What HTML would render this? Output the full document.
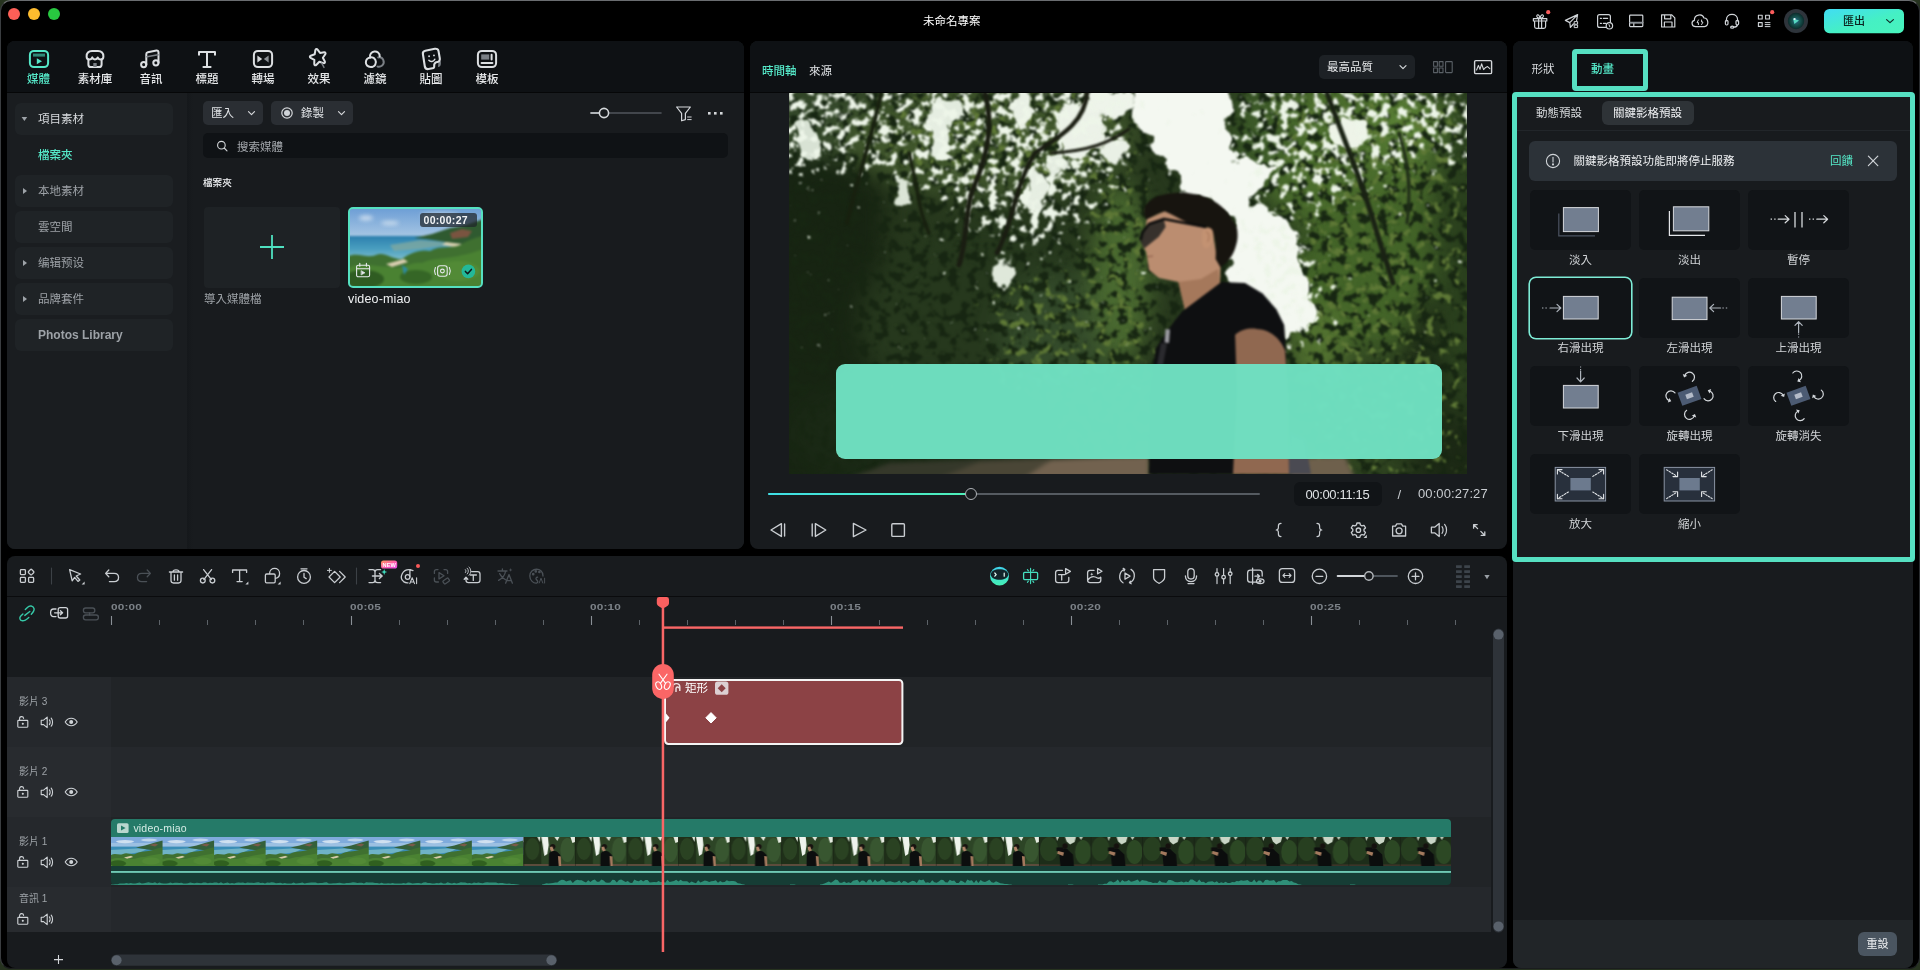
<!DOCTYPE html>
<html lang="zh-Hant">
<head>
<meta charset="utf-8">
<title>未命名專案</title>
<style>
*{box-sizing:border-box;margin:0;padding:0}
html,body{width:1920px;height:970px;overflow:hidden;background:#000}
body{font-family:"Liberation Sans","Noto Sans CJK TC",sans-serif;font-size:12px;color:#d6d9dc;position:relative}
.a{position:absolute}
.t{position:absolute;white-space:nowrap;line-height:14px;height:14px}
.c{transform:translateX(-50%)}
svg{position:absolute;overflow:visible}
.ic{fill:none;stroke-linecap:round;stroke-linejoin:round}
.dim{stroke:#5a6066}
.tl{stroke:#4ed9b9}
.panel{background:#181b1e;border-radius:8px}
.hdr{background:#0e1114;border-radius:8px 8px 0 0}
.teal{color:#55e0c0}
.sbi{position:absolute;left:15px;width:158px;height:32px;border-radius:6px;background:#1f2326}
.card{position:absolute;width:101px;height:60px;border-radius:5px;background:#111417}
.lbl{position:absolute;white-space:nowrap;line-height:14px;height:14px;font-size:11.5px;color:#d0d3d6;transform:translateX(-50%)}
.trk{position:absolute;left:7px;width:1484px}
.th{position:absolute;left:7px;width:104px;background:#25292d}
.tname{position:absolute;white-space:nowrap;line-height:12px;font-size:10px;color:#9ea3a8;left:19px}
</style>
</head>
<body>
<div id="root" style="position:absolute;left:0;top:0;width:1920px;height:970px;will-change:transform">
<!-- desktop sliver + window frame -->
<div class="a" style="left:0;top:0;width:1920px;height:970px;background:#26331f"></div>
<div class="a" style="left:0;top:0;width:1920px;height:969px;background:#000;border-radius:11px;border-top:1px solid #6a6d70;border-left:1px solid #3a3d40;border-right:1px solid #2a2d30;border-bottom:1px solid #1a1c1e"></div>

<!-- TITLEBAR -->
<div class="a" style="left:8px;top:8px;width:12px;height:12px;border-radius:50%;background:#fe5f57"></div>
<div class="a" style="left:28px;top:8px;width:12px;height:12px;border-radius:50%;background:#febc2e"></div>
<div class="a" style="left:48px;top:8px;width:12px;height:12px;border-radius:50%;background:#28c840"></div>
<div class="t" style="left:923px;top:14.4px;font-size:11.5px;color:#fff">未命名專案</div>

<!-- PANELS -->
<div class="a panel" style="left:7px;top:41px;width:737px;height:508px"></div>
<div class="a hdr" style="left:7px;top:41px;width:737px;height:51px"></div>
<div class="a" style="left:7px;top:92px;width:737px;height:1px;background:#060708"></div>
<div class="a" style="left:7px;top:93px;width:180px;height:456px;background:#1a1d20;border-radius:0 0 0 8px"></div>
<div class="a" style="left:187px;top:93px;width:557px;height:456px;background:linear-gradient(90deg,#15181b 0,#181b1e 6px);border-radius:0 0 8px 0"></div>

<div class="a panel" style="left:750px;top:41px;width:757px;height:508px"></div>
<div class="a hdr" style="left:750px;top:41px;width:757px;height:51px"></div>
<div class="a" style="left:750px;top:92px;width:757px;height:1px;background:#060708"></div>

<div class="a panel" style="left:1513px;top:41px;width:400px;height:927px"></div>
<div class="a hdr" style="left:1513px;top:41px;width:400px;height:51px"></div>
<div class="a" style="left:1513px;top:92px;width:400px;height:1px;background:#060708"></div>
<div class="a" style="left:1513px;top:920px;width:400px;height:48px;background:#212528;border-radius:0 0 8px 8px"></div>

<div class="a panel" style="left:7px;top:556px;width:1500px;height:412px"></div>
<div class="a" style="left:7px;top:596px;width:1500px;height:1px;background:#0a0b0d"></div>
<!-- TITLEBAR ICONS -->
<svg width="1920" height="41" viewBox="0 0 1920 41" style="left:0;top:0">
<defs><linearGradient id="gexp" x1="0" y1="0" x2="1" y2="1"><stop offset="0" stop-color="#41dcf4"/><stop offset=".55" stop-color="#45f0c4"/><stop offset="1" stop-color="#48f4bc"/></linearGradient>
<radialGradient id="gav" cx=".5" cy=".5" r=".5"><stop offset="0" stop-color="#2a6a8c"/><stop offset=".55" stop-color="#16504c"/><stop offset="1" stop-color="#0c2a2a"/></radialGradient></defs>
<g class="ic" stroke="#d0d4d8" stroke-width="1.2">
 <!-- gift -->
 <path d="M1533.4 18.6 H1546.8 V21 H1533.4Z M1534.6 21.2 V26.6 C1534.6 27.8 1535.2 28.4 1536.4 28.4 H1543.8 C1545 28.4 1545.6 27.8 1545.6 26.6 V21.2 M1538.6 18.8 V28.2 M1541.6 18.8 V28.2"/>
 <path d="M1540 18.4 C1538 18.4 1536.4 17 1536.8 15.6 C1537.4 14 1539.6 14.8 1540 18.4 C1540.4 14.8 1542.8 14 1543.4 15.6 C1543.8 17 1542 18.4 1540 18.4Z" stroke-width="1.1"/>
 <!-- send -->
 <path d="M1577.6 14.6 L1565.4 20.4 L1569.8 22.6 L1570.4 27.4 L1573.4 24 M1577.6 14.6 L1569.8 22.6 M1577.6 14.6 L1576.6 20.4"/><rect x="1574.6" y="21.6" width="3" height="2.6" stroke-width="1"/><rect x="1574.6" y="25" width="3" height="2.6" stroke-width="1"/>
 <!-- tasks -->
 <path d="M1606 27.4 H1599.6 C1598.2 27.4 1597.6 26.8 1597.6 25.4 V16.6 C1597.6 15.2 1598.2 14.6 1599.6 14.6 H1608.4 C1609.8 14.6 1610.4 15.2 1610.4 16.6 V22 M1600.4 18.4 H1601.4 M1603.4 18.4 H1607.6 M1600.4 23.4 H1601.4 M1603.4 23.4 H1606"/><circle cx="1609.4" cy="25.8" r="3.2"/><path d="M1609 24.6 L1609.8 26.8" stroke-width="1"/>
 <!-- layout -->
 <rect x="1629.6" y="15.2" width="13.2" height="11.4" rx=".8"/><path d="M1629.6 22.6 H1642.8 M1633.8 22.8 V26.4"/><path d="M1630.2 22.6 H1642.2" stroke="#8a9096" stroke-width="1.6"/>
 <!-- save -->
 <path d="M1661.6 14.8 H1671.8 L1674.8 17.8 V27 H1661.6Z M1664.6 14.8 V18.8 H1670.8 V14.8 M1664.4 27 V22 H1672 V27"/>
 <!-- cloud -->
 <path d="M1695.8 26.6 C1691.4 26.6 1690.8 21.4 1694.4 20.4 C1694 14.4 1702.4 13 1704 18 C1708.6 17.6 1709.4 26.6 1704.4 26.6Z"/><path d="M1698.4 20 L1697 22.6 H1698.4 V24.6 M1701.6 24.6 L1703 22 H1701.6 V20" stroke-width="1" />
 <!-- headset -->
 <path d="M1726.4 21 V19.8 C1726.4 12.6 1737.6 12.6 1737.6 19.8 V21"/><rect x="1725.4" y="20.4" width="2.6" height="4.6" rx="1.2"/><rect x="1736" y="20.4" width="2.6" height="4.6" rx="1.2"/><path d="M1737.4 25 C1737 26.6 1735.4 27.2 1733.6 27.2"/><ellipse cx="1732.2" cy="27.2" rx="1.6" ry="1"/>
 <!-- apps -->
 <rect x="1758.4" y="15.2" width="3.8" height="3.8" stroke-width="1.1"/><rect x="1765.6" y="15.2" width="3.8" height="3.8" stroke-width="1.1"/><rect x="1758.4" y="22.6" width="3.8" height="3.8" stroke-width="1.1"/><path d="M1765.2 22.6 H1770 M1765.2 24.6 H1770 M1765.2 26.6 H1770" stroke-width="1"/>
</g>
<circle cx="1548.2" cy="12.2" r="2.1" fill="#fb5c5c"/>
<circle cx="1772.2" cy="12.2" r="2.1" fill="#fb5c5c"/>
<circle cx="1796" cy="21" r="12" fill="#2e343b"/>
<circle cx="1796" cy="21" r="8.2" fill="url(#gav)"/>
<path d="M1793 18.4 L1799 20.4 L1794.4 24Z" fill="#56d8c0"/><circle cx="1794.6" cy="19" r="1.1" fill="#eef8ff"/>
<rect x="1824" y="9" width="80" height="24.2" rx="5.4" fill="url(#gexp)"/>
<path d="M1886.6 19.6 L1890 22.6 L1893.4 19.6" fill="none" stroke="#0e2a26" stroke-width="1.2" stroke-linecap="round" stroke-linejoin="round"/>
</svg>
<div class="t" style="left:1843px;top:14px;font-size:11px;color:#0c2420;font-weight:500">匯出</div>
<!-- MEDIA TABS -->
<svg width="1920" height="970" viewBox="0 0 1920 970" style="left:0;top:0">
<g class="ic" stroke-width="2" stroke="#dcdfe2">
 <!-- media (active) -->
 <g stroke="#55e8c8">
  <rect x="29.9" y="50.9" width="18.2" height="16.2" rx="4"/>
  <rect x="33" y="53.6" width="12" height="3" fill="#2f8a78" stroke="none"/>
  <path d="M36.8 58.2 L42 61.2 L36.8 64.2Z" fill="#55e8c8" stroke="none"/>
 </g>
 <!-- stock -->
 <g transform="translate(95,59)">
  <path d="M-8.4 -2.5 C-8.4 -7 -6 -8 -3 -8 L3 -8 C6 -8 8.4 -7 8.4 -2.5 C8.4 -0.8 7.4 0.4 5.8 0.4 C4 0.4 3 -0.8 2.8 -1.6 C2.4 -0.6 1.4 0.4 0 0.4 C-1.4 0.4 -2.4 -0.6 -2.8 -1.6 C-3 -0.8 -4 0.4 -5.8 0.4 C-7.4 0.4 -8.4 -0.8 -8.4 -2.5Z"/>
  <path d="M-6.6 0.6 V5.4 C-6.6 7.4 -5.6 8 -4 8 H4 C5.6 8 6.6 7.4 6.6 5.4 V0.6"/>
  <rect x="-1.7" y="4" width="3.4" height="4" fill="#7a7f85" stroke="none"/>
 </g>
 <!-- audio -->
 <g transform="translate(150,59)">
  <circle cx="-6.3" cy="5.6" r="2.6"/><circle cx="5.9" cy="3.8" r="2.6"/>
  <path d="M-3.7 5.6 V-5 C-3.7 -6 -3.2 -6.6 -2.2 -6.8 L6.4 -8.4 C7.6 -8.6 8.5 -8 8.5 -6.8 V3.8"/>
  <path d="M-3 -2.2 L8 -4.2" stroke="#7a7f85" stroke-width="1.6"/>
 </g>
 <!-- title T -->
 <g transform="translate(207,59)">
  <path d="M-8 -4.2 V-7 H8 V-4.2 M0 -7 V8 M-3.6 8 H3.6"/>
 </g>
 <!-- transition -->
 <g transform="translate(263,59)">
  <rect x="-9.1" y="-8.1" width="18.2" height="16.2" rx="4"/>
  <path d="M-5.6 -3.6 L-0.8 0 L-5.6 3.6Z" fill="#d4d7da" stroke="none"/>
  <path d="M5.6 -3.6 L0.8 0 L5.6 3.6Z" fill="#8a8f94" stroke="none"/>
 </g>
 <!-- effects star -->
 <g transform="translate(318,58)">
  <path d="M-0.6 -8.4 C0 -9.4 1.2 -9.2 1.6 -8.2 L3.2 -4.4 L7.4 -4 C8.6 -3.8 8.8 -2.6 8 -1.9 L4.8 0.9 L5.8 5 C6 6.2 5 6.9 4 6.3 L0.4 4 L-3.4 6.3 C-4.4 6.9 -5.4 6.1 -5.1 5 L-4 0.9 L-7.2 -1.9 C-8.1 -2.7 -7.6 -3.9 -6.5 -4 L-2.3 -4.4Z" transform="rotate(-14)"/>
  <path d="M3.6 5.2 L6 9.4" stroke="#7a7f85" stroke-width="1.4"/>
 </g>
 <!-- filter clouds -->
 <g transform="translate(374.5,59)">
  <path d="M3.6 -1.6 C8.6 -2.6 11 3.4 7.6 6.6 C6.2 7.8 4.4 8 3 7.6" stroke="#7a7f85"/>
  <path d="M-4.4 -1.4 C-6 -8.6 5.4 -10 5.2 -2.6"/>
  <path d="M-3.6 -1.6 C-10.2 -1.4 -10.4 8 -3.8 8 C0.4 8 2.6 4.2 0.8 0.8 C-0.2 -1 -2 -1.8 -3.6 -1.6Z"/>
 </g>
 <!-- sticker -->
 <g transform="translate(431,59) scale(1.06)">
  <path d="M7 3 L9.3 2 L9.3 4.6 C9.3 6.4 8 7.4 6.6 7.6Z" fill="#7a7f85" stroke="none"/>
  <path d="M-7.6 -4.4 C-8 -6.2 -7 -7.4 -5.4 -7.8 L3.6 -9.6 C5.4 -10 6.8 -9 7.1 -7.4 L8.3 -0.6 C8.6 1.2 7.6 2.6 6 2.8 C3.6 3.2 2.8 4.6 3 6.6 C3.2 7.8 2.6 8.6 1.4 8.8 L-2.4 9.5 C-4.2 9.8 -5.4 8.8 -5.8 7.2Z" />
  <circle cx="-1.8" cy="-2.6" r="0.9" fill="#d4d7da" stroke="none"/><circle cx="2.8" cy="-3.4" r="0.9" fill="#d4d7da" stroke="none"/>
  <path d="M-2 1.2 C-0.6 3 2.6 2.6 3.6 0.2" stroke-width="1.4"/>
 </g>
 <!-- template -->
 <g transform="translate(487,59)">
  <rect x="-9.1" y="-8.1" width="18.2" height="16.2" rx="4"/>
  <rect x="-5.8" y="-4.6" width="8" height="5.2" fill="#7a7f85" stroke="none"/>
  <path d="M4.6 -4.2 V0.4 M-5.4 4 H5.4"/>
 </g>
</g>
</svg>
<div class="lbl" style="left:38.5px;top:72px;color:#55e8c8;font-weight:500">媒體</div>
<div class="lbl" style="left:95px;top:72px;color:#e6e8ea;font-weight:500">素材庫</div>
<div class="lbl" style="left:151px;top:72px;color:#e6e8ea;font-weight:500">音訊</div>
<div class="lbl" style="left:207px;top:72px;color:#e6e8ea;font-weight:500">標題</div>
<div class="lbl" style="left:263px;top:72px;color:#e6e8ea;font-weight:500">轉場</div>
<div class="lbl" style="left:319px;top:72px;color:#e6e8ea;font-weight:500">效果</div>
<div class="lbl" style="left:375px;top:72px;color:#e6e8ea;font-weight:500">濾鏡</div>
<div class="lbl" style="left:431px;top:72px;color:#e6e8ea;font-weight:500">貼圖</div>
<div class="lbl" style="left:487px;top:72px;color:#e6e8ea;font-weight:500">模板</div>

<!-- SIDEBAR -->
<div class="sbi" style="top:103px"></div>
<div class="sbi" style="top:175px"></div>
<div class="sbi" style="top:211px"></div>
<div class="sbi" style="top:247px"></div>
<div class="sbi" style="top:283px"></div>
<div class="sbi" style="top:319px"></div>
<svg width="200" height="500" viewBox="0 0 200 500" style="left:0;top:93px">
 <path d="M21.6 24 h5.6 l-2.8 4z" fill="#9ea3a8"/>
 <path d="M23 95 v6 l4 -3z" fill="#9ea3a8"/>
 <path d="M23 167 v6 l4 -3z" fill="#9ea3a8"/>
 <path d="M23 203 v6 l4 -3z" fill="#9ea3a8"/>
</svg>
<div class="t" style="left:38px;top:112px;font-size:11.5px;color:#d9dcdf">項目素材</div>
<div class="t" style="left:38px;top:148px;font-size:11.5px;color:#55e8c8;font-weight:500">檔案夾</div>
<div class="t" style="left:38px;top:184px;font-size:11.5px;color:#9da2a7">本地素材</div>
<div class="t" style="left:38px;top:220px;font-size:11.5px;color:#9da2a7">雲空間</div>
<div class="t" style="left:38px;top:256px;font-size:11.5px;color:#9da2a7">编辑预设</div>
<div class="t" style="left:38px;top:292px;font-size:11.5px;color:#9da2a7">品牌套件</div>
<div class="t" style="left:38px;top:328px;font-size:12px;color:#9da2a7;font-weight:bold">Photos Library</div>

<!-- CONTENT TOOLBAR -->
<div class="a" style="left:203px;top:101px;width:60px;height:24px;border-radius:5px;background:#2a2e33"></div>
<div class="t" style="left:211px;top:106px;font-size:11.5px;color:#e0e3e6">匯入</div>
<div class="a" style="left:271px;top:101px;width:82px;height:24px;border-radius:5px;background:#2a2e33"></div>
<div class="t" style="left:301px;top:106px;font-size:11.5px;color:#e0e3e6">錄製</div>
<div class="a" style="left:203px;top:133px;width:525px;height:25px;border-radius:5px;background:#0f1215"></div>
<div class="t" style="left:237px;top:139.6px;font-size:11.5px;color:#a4a8ad">搜索媒體</div>
<div class="t" style="left:203px;top:176.2px;font-size:9.6px;color:#f0f2f4;font-weight:500">檔案夾</div>
<svg width="560" height="80" viewBox="0 0 560 80" style="left:187px;top:93px">
 <g class="ic" stroke="#d4d7da" stroke-width="1.2">
  <path d="M61.5 18.6 l3 3 l3 -3"/>
  <circle cx="100" cy="20" r="5.2"/><circle cx="100" cy="20" r="3" fill="#cfd3d7" stroke="none"/>
  <path d="M151.5 18.6 l3 3 l3 -3"/>
  <circle cx="34.4" cy="52.2" r="3.8" stroke-width="1.1"/><path d="M37.2 55 l2.8 2.8" stroke-width="1.1"/>
  <path d="M404 20 H474" stroke="#50565c" stroke-width="1.6"/>
  <path d="M404 20 H412" stroke="#d4d7da" stroke-width="1.6"/>
  <circle cx="417" cy="20" r="4.6" fill="#181b1e" stroke-width="1.6"/>
  <path d="M489.6 14 H503.4 L498.4 20.4 V26.6 L494.6 27.8 V20.4Z"/>
  <path d="M500.6 24 h3.6 M500.6 26.6 h3.6" stroke-width="1"/>
 </g>
 <g fill="#d4d7da"><rect x="521" y="19" width="2.6" height="2.6"/><rect x="527" y="19" width="2.6" height="2.6"/><rect x="533" y="19" width="2.6" height="2.6"/></g>
</svg>

<!-- IMPORT CARD + THUMB -->
<div class="a" style="left:204px;top:207px;width:136px;height:81px;border-radius:4px;background:#1e2225"></div>
<svg width="30" height="30" viewBox="0 0 30 30" style="left:256.5px;top:231.5px"><path d="M15 3 V27 M3 15 H27" stroke="#4fe0c0" stroke-width="1.8" fill="none"/></svg>
<div class="t" style="left:204px;top:292px;font-size:11.5px;color:#9da2a7">導入媒體檔</div>
<div class="t" style="left:348px;top:292px;font-size:12.5px;color:#f0f2f4;letter-spacing:.15px">video-miao</div>
<div class="a" id="thumb" style="left:348px;top:207px;width:135px;height:81px;border-radius:5px;border:2px solid #55e0c0;overflow:hidden;background:#6fa0c4">
<svg width="132" height="77" viewBox="0 0 132 77" style="left:0;top:0">
 <defs><filter id="tb" x="-20%" y="-20%" width="140%" height="140%" color-interpolation-filters="sRGB"><feGaussianBlur stdDeviation="0.9"/></filter>
 <filter id="tb2" x="-20%" y="-20%" width="140%" height="140%" color-interpolation-filters="sRGB"><feGaussianBlur stdDeviation="2"/></filter>
 <linearGradient id="sky1" x1="0" y1="0" x2="0" y2="1"><stop offset="0" stop-color="#6e9fd6"/><stop offset="1" stop-color="#a9c8e4"/></linearGradient>
 <linearGradient id="sea1" x1="0" y1="0" x2="0" y2="1"><stop offset="0" stop-color="#2c7fae"/><stop offset=".5" stop-color="#4a9fc0"/><stop offset="1" stop-color="#86c2cc"/></linearGradient></defs>
 <rect width="132" height="29" fill="url(#sky1)"/>
 <g filter="url(#tb2)"><ellipse cx="16" cy="9" rx="7" ry="2.6" fill="#dfe9f2" opacity=".8"/><ellipse cx="40" cy="14" rx="9" ry="2" fill="#e6eef5" opacity=".7"/><ellipse cx="90" cy="6" rx="20" ry="3" fill="#c4d8ea" opacity=".7"/></g>
 <g filter="url(#tb)">
 <rect x="-4" y="27" width="140" height="26" fill="url(#sea1)"/>
 <path d="M40 36 L70 31 L96 33 L100 36 L70 40 L44 42Z" fill="#7ea8a0" opacity=".8"/>
 <path d="M64 29 L82 25 L100 19 L116 16 L136 9 V40 L112 37 L96 33 L76 30Z" fill="#2f5a30"/>
 <path d="M100 24 L112 20 L122 22 L118 28 L102 30Z" fill="#7a5440"/>
 <path d="M96 33 L120 36 L110 39 L92 36Z" fill="#d8d0b0"/>
 <path d="M-4 48 C8 42 16 50 26 46 C34 42 40 50 52 50 C60 44 70 40 80 42 C90 36 100 40 110 36 C120 30 128 28 136 26 V80 H-4Z" fill="#3f7030"/>
 <path d="M36 55 L54 50 L58 53 L42 58Z" fill="#d9ceb0"/>
 <path d="M-4 60 C10 52 24 58 40 58 C52 62 60 52 72 54 C84 48 100 50 112 46 C124 44 130 40 136 40 V80 H-4Z" fill="#4a8232"/>
 <ellipse cx="14" cy="70" rx="20" ry="9" fill="#2f5c22"/>
 <ellipse cx="66" cy="68" rx="16" ry="7" fill="#356626"/>
 <ellipse cx="108" cy="62" rx="22" ry="10" fill="#528a36"/>
 <path d="M52 56 L58 60 L54 66Z" fill="#2d8aa0"/>
 </g>
</svg>
<div class="a" style="left:70px;top:4px;width:57px;height:14px;border-radius:3px;background:rgba(30,36,42,.72)"></div>
<div class="t" style="left:73.5px;top:4px;font-size:10.5px;color:#f2f4f6;font-weight:bold;letter-spacing:.3px">00:00:27</div>
<svg width="132" height="77" viewBox="0 0 132 77" style="left:0;top:0">
 <g class="ic" stroke="#e6e9ec" stroke-width="1.1" transform="translate(0,2.2)">
  <rect x="6.6" y="54" width="13" height="11.6" rx="1.6"/><path d="M6.6 57.6 h13 M9.8 52 v3 M16.4 52 v3"/><path d="M11.4 59.6 l3.6 2 l-3.6 2z" fill="#e6e9ec" stroke-width=".6"/>
  <rect x="87.6" y="54.6" width="9.6" height="10.4" rx="2.4"/><circle cx="92.4" cy="59.8" r="1.9"/><path d="M85.4 56.4 c-1 2 -1 4.8 0 6.8 M99.4 56.4 c1 2 1 4.8 0 6.8"/>
 </g>
 <circle cx="118.4" cy="62.4" r="6.8" fill="#23b899"/>
 <path d="M115.4 62.4 l2.2 2.4 l3.8 -4.4" fill="none" stroke="#10181a" stroke-width="1.5" stroke-linecap="round" stroke-linejoin="round"/>
</svg>
</div>
<!-- PREVIEW HEADER -->
<div class="t" style="left:762px;top:64px;font-size:11.5px;color:#55e8c8;font-weight:500">時間軸</div>
<div class="t" style="left:809px;top:64px;font-size:11.5px;color:#e0e3e6">來源</div>
<div class="a" style="left:1319px;top:55px;width:96px;height:24px;border-radius:5px;background:#1d2125"></div>
<div class="t" style="left:1327px;top:60px;font-size:11.5px;color:#e6e8ea">最高品質</div>
<svg width="200" height="40" viewBox="0 0 200 40" style="left:1319px;top:47px">
 <g class="ic" stroke="#d4d7da" stroke-width="1.2">
  <path d="M81 18.6 l3 3 l3 -3"/>
  <g class="dim" stroke-width="1.1"><rect x="114.6" y="14.6" width="3.8" height="4.6"/><rect x="120.2" y="14.6" width="3.8" height="4.6"/><rect x="114.6" y="21" width="3.8" height="4.6"/><rect x="120.2" y="21" width="3.8" height="4.6"/><rect x="126.6" y="14.6" width="6.6" height="11" rx=".6"/></g>
  <rect x="155.6" y="13.6" width="17" height="13" rx="1.2" stroke-width="1.4"/>
  <path d="M157.6 23 L159.4 18.4 L161 22.4 L162.6 16.8 L164.6 22.6 L166.2 20.8 L168.6 19.6 L170.8 21.6" stroke-width="1.1"/>
 </g>
</svg>

<!-- VIDEO -->
<div class="a" id="video" style="left:789px;top:93px;width:678px;height:381px;overflow:hidden;background:#2e4323">
<!--PHOTO-->
<svg width="678" height="381" viewBox="0 0 678 381" style="left:0;top:0">
<defs>
 <filter id="pb" x="-10%" y="-10%" width="120%" height="120%" color-interpolation-filters="sRGB"><feGaussianBlur stdDeviation="12"/></filter>
 <filter id="pb2" x="-10%" y="-10%" width="120%" height="120%" color-interpolation-filters="sRGB"><feGaussianBlur stdDeviation="2.2"/></filter>
 <filter id="pb1" x="-5%" y="-5%" width="110%" height="110%" color-interpolation-filters="sRGB"><feGaussianBlur stdDeviation="0.9"/></filter>
 <filter id="rag" x="-5%" y="-5%" width="110%" height="110%" color-interpolation-filters="sRGB">
  <feTurbulence type="fractalNoise" baseFrequency="0.06" numOctaves="3" seed="4" result="n"/>
  <feDisplacementMap in="SourceGraphic" in2="n" scale="22" xChannelSelector="R" yChannelSelector="G"/>
  <feGaussianBlur stdDeviation="1"/>
 </filter>
 <filter id="speck" x="0" y="0" width="100%" height="100%" color-interpolation-filters="sRGB">
  <feTurbulence type="fractalNoise" baseFrequency="0.12" numOctaves="3" seed="11"/>
  <feColorMatrix type="matrix" values="0 0 0 0 1  0 0 0 0 1  0 0 0 0 1  1 0 0 0 0" result="n"/>
  <feGaussianBlur in="SourceGraphic" stdDeviation="16" result="m"/>
  <feComposite in="n" in2="m" operator="arithmetic" k1="0" k2="10" k3="2.8" k4="-7.9"/>
  <feColorMatrix type="matrix" values="0 0 0 0 .93  0 0 0 0 .96  0 0 0 0 .91  0 0 0 1 0"/>
  <feGaussianBlur stdDeviation="0.9"/>
 </filter>
 <filter id="dspeck" x="0" y="0" width="100%" height="100%" color-interpolation-filters="sRGB">
  <feTurbulence type="fractalNoise" baseFrequency="0.1" numOctaves="3" seed="23"/>
  <feColorMatrix type="matrix" values="0 0 0 0 1  0 0 0 0 1  0 0 0 0 1  1 0 0 0 0" result="n"/>
  <feGaussianBlur in="SourceGraphic" stdDeviation="14" result="m"/>
  <feComposite in="n" in2="m" operator="arithmetic" k1="0" k2="9" k3="2.4" k4="-7.05"/>
  <feColorMatrix type="matrix" values="0 0 0 0 .09  0 0 0 0 .15  0 0 0 0 .07  0 0 0 1 0"/>
  <feGaussianBlur stdDeviation="1"/>
 </filter>
 <filter id="lspeck" x="0" y="0" width="100%" height="100%" color-interpolation-filters="sRGB">
  <feTurbulence type="fractalNoise" baseFrequency="0.11" numOctaves="3" seed="31"/>
  <feColorMatrix type="matrix" values="0 0 0 0 1  0 0 0 0 1  0 0 0 0 1  0 1 0 0 0" result="n"/>
  <feGaussianBlur in="SourceGraphic" stdDeviation="14" result="m"/>
  <feComposite in="n" in2="m" operator="arithmetic" k1="0" k2="9" k3="2.4" k4="-7.6"/>
  <feColorMatrix type="matrix" values="0 0 0 0 .37  0 0 0 0 .47  0 0 0 0 .21  0 0 0 1 0"/>
  <feGaussianBlur stdDeviation="0.9"/>
 </filter>
</defs>
<rect width="678" height="381" fill="#27381d"/>
<g filter="url(#pb)">
 <rect x="-30" y="60" width="125" height="340" fill="#172412"/>
 <ellipse cx="40" cy="26" rx="70" ry="40" fill="#34482a"/>
 <ellipse cx="200" cy="46" rx="150" ry="56" fill="#3f552b"/>
 <ellipse cx="200" cy="230" rx="130" ry="100" fill="#26381d"/>
 <ellipse cx="270" cy="240" rx="60" ry="60" fill="#334a2a"/>
 <ellipse cx="130" cy="340" rx="130" ry="56" fill="#1a2915"/>
 <ellipse cx="332" cy="180" rx="30" ry="90" fill="#4a6a30"/>
 <ellipse cx="330" cy="320" rx="40" ry="50" fill="#2b4020"/>
 <ellipse cx="560" cy="60" rx="100" ry="80" fill="#4a6c2c"/>
 <ellipse cx="590" cy="200" rx="90" ry="100" fill="#436428"/>
 <ellipse cx="570" cy="320" rx="100" ry="70" fill="#2f4420"/>
 <ellipse cx="660" cy="300" rx="50" ry="110" fill="#1c2915"/>
 <ellipse cx="530" cy="250" rx="30" ry="40" fill="#527230"/>
 <ellipse cx="672" cy="150" rx="28" ry="180" fill="#2a401d"/>
 <ellipse cx="470" cy="36" rx="28" ry="50" fill="#3c5a28"/>
 <ellipse cx="620" cy="30" rx="40" ry="30" fill="#587e34"/>
</g>
<!-- dark / light leaf clumps -->
<g filter="url(#dspeck)"><rect x="-40" y="-40" width="760" height="460" fill="#fff"/></g>
<g filter="url(#lspeck)"><path d="M300 90 H362 V300 H300Z M455 0 H678 V381 H505 L525 230 L505 130Z M100 0 H340 V90 H100Z M200 180 H320 V300 H200Z" fill="#fff"/></g>
<!-- sky -->
<g filter="url(#rag)">
 <path d="M346 -20 L450 -20 L436 39 L446 65 L484 75 L472 92 L462 110 L500 126 L514 177 L527 224 L503 248 L470 250 L440 200 L446 132 L421 105 L389 100 L388 84 L360 49 L343 25Z" fill="#f4f8f1"/>
 <ellipse cx="560" cy="42" rx="17" ry="15" fill="#eef4e8"/>
 <ellipse cx="292" cy="36" rx="24" ry="30" fill="#ecf2e8"/>
 <ellipse cx="246" cy="100" rx="12" ry="24" fill="#e6eee2"/>
 <ellipse cx="155" cy="20" rx="17" ry="12" fill="#e2ebde"/>
 <ellipse cx="18" cy="46" rx="12" ry="18" fill="#d8e2d4"/>
 <ellipse cx="214" cy="182" rx="9" ry="16" fill="#dfe8da"/>
 <ellipse cx="150" cy="34" rx="11" ry="34" fill="#e6eee2"/>
 <ellipse cx="232" cy="18" rx="11" ry="22" fill="#e9f0e5"/>
 <ellipse cx="318" cy="10" rx="26" ry="14" fill="#eef4ea"/>
 <ellipse cx="326" cy="56" rx="14" ry="12" fill="#e9f0e5"/>
 <ellipse cx="114" cy="98" rx="8" ry="12" fill="#dbe5d6"/>
 <ellipse cx="268" cy="70" rx="10" ry="14" fill="#e4ece0"/>
</g>
<!-- sky specks through foliage -->
<g filter="url(#speck)">
 <path d="M-20 -20 H345 V30 L310 120 L250 170 L200 150 L120 80 L-20 80Z M449 -20 H700 V60 L600 80 L545 110 L505 110 L465 95 L445 55Z M430 110 L520 130 L540 230 L500 260Z" fill="#fff"/>
</g>
<!-- branches -->
<g fill="none" stroke="#1a1d12" stroke-linecap="round" filter="url(#pb1)">
 <path d="M196 0 C204 30 200 60 184 96 C176 116 178 150 170 172" stroke-width="5"/>
 <path d="M298 0 C296 30 270 44 246 60 C226 92 224 130 208 160" stroke-width="4.4"/>
 <path d="M340 36 C320 50 300 58 262 60" stroke-width="3"/>
 <path d="M92 0 C84 40 70 80 58 130" stroke-width="4" stroke="#18200f"/>
 <path d="M120 60 C130 100 130 120 140 140" stroke-width="3.4" stroke="#18200f"/>
 <path d="M538 0 C556 50 574 90 588 140 C594 160 600 176 604 190" stroke-width="5" stroke="#1a2214"/>
 <path d="M610 40 C620 70 622 100 618 130" stroke-width="3" stroke="#1f2c18"/>
</g>
<!-- ground -->
<g filter="url(#pb2)">
 <path d="M60 385 L100 370 L200 366 L330 362 L360 385Z" fill="#35382a"/>
 <path d="M150 385 L190 369 L260 366 L250 385Z" fill="#4a4636"/>
 <path d="M235 385 L262 367 L360 363 L360 385Z" fill="#72624f"/>
 <path d="M500 385 L505 365 L556 363 L566 385Z" fill="#6e604c"/>
</g>
<!-- person -->
<g filter="url(#pb1)">
 <path d="M501 340 L516 346 L522 381 L498 381Z" fill="#4a4a52"/>
 <!-- neck/face -->
 <path d="M358 126 L376 118 L398 128 L412 133 L424 140 L428 165 L431.5 174 L431 190 L396 217 L389.4 189 L370 185 L360 177 L358 163.4 L357 158.5 L353.1 151.7 L355.1 142Z" fill="#bb8d70"/>
 <path d="M389.4 189 L396 217 L431 190 L429 176 L412 186Z" fill="#a5785b"/>
 <path d="M358 163.8 L364 163" stroke="#8a5a48" stroke-width="1" fill="none"/>
 <!-- shirt -->
 <path d="M393.3 218.3 L432.5 188.9 L456 189.9 L473.6 200.6 L487.3 216.3 L495.2 232 L497.1 259.4 L499 300 L500 381 L360 381 L362 300 L364.9 270 L366.8 255.5 L375.7 241.8 L385.5 228.1Z" fill="#0e0f11"/>
 <!-- arm -->
 <path d="M446.2 241.8 C452 236 462 234.6 467.7 235.9 C478 236.4 490 242 496.1 257.5 L499 300 L500 381 L442 381 C444 340 443 290 444.2 270.2Z" fill="#906850"/>
 <path d="M444 381 L448 300 L446.2 244 L440 262 L436 381Z" fill="#0e0f11"/>
 <!-- strap -->
 <path d="M376.5 236 L381 236.6 L380 250 L375.6 249.4Z" fill="#9a9aa0"/>
 <path d="M372 250 L378 251 L374 272 L368 272Z" fill="#2a2a2e"/>
 <!-- hair -->
 <path d="M355.1 116.4 C357 110 362 106.6 368 103.6 C376 100.6 384 99.7 393.3 99.7 C400 99.9 406 101 412.9 102.7 C419 105 424 107 428.6 110.5 C434 114.6 438 118.6 440.3 122.3 C444.6 128 447 132 448.1 136 C449 142 448.6 147 447.2 151.7 C446 156 444.6 160 442.3 163.4 C439.6 167.6 436 171 431.5 174.2 L426.6 166 C427 158 427 152 426 146 C424.6 139 421 134.6 417.8 134 L410.9 134 L397.2 129.1 C390 125.6 382 121 375.7 118.3 C371 119.6 367 121.6 363.9 123.2 L357 126.4 C355.6 123 354.8 120 355.1 116.4Z" fill="#17140f"/>
 <!-- ear -->
 <path d="M413 140 C414 134 421 132.6 423.4 137 C425.6 142 424 150 419.6 154.6 C416 157 413 153 413 148Z" fill="#c39272"/>
 <path d="M417 139 C420 139 421 144 418.6 149" stroke="#a57458" stroke-width="1" fill="none"/>
 <!-- glasses -->
 <path d="M351.2 147.7 L353.1 139.9 L360 131.1 L374.7 126.2 L376.6 134 L369.8 143.8 L355.1 155.6Z" fill="#2b2926" opacity=".92"/>
 <path d="M351.4 147 L353.3 139.6 L360 131 L375 126 L417 134" stroke="#0c0c0c" stroke-width="2.4" fill="none" stroke-linejoin="round"/>
</g>
</svg>
<!--/PHOTO-->
</div>
<div class="a" style="left:836px;top:363.6px;width:606px;height:95px;border-radius:9px;background:rgba(112,224,194,.975)"></div>

<!-- PROGRESS -->
<div class="a" style="left:768px;top:493px;width:492px;height:2px;background:#555b61;border-radius:1px"></div>
<div class="a" style="left:768px;top:493px;width:203px;height:2px;background:linear-gradient(90deg,#3fdfe6,#4ff0b8);border-radius:1px"></div>
<div class="a" style="left:965px;top:488px;width:12px;height:12px;border-radius:50%;border:1.9px solid #aeb2b6;background:#181b1e"></div>
<div class="a" style="left:1294px;top:482px;width:88px;height:24px;border-radius:6px;background:#111417"></div>
<div class="t" style="left:1305.5px;top:488.4px;font-size:13px;letter-spacing:-.36px;color:#dfe2e5">00:00:11:15</div>
<div class="t" style="left:1397.5px;top:488px;font-size:13px;color:#c8ccd0">/</div>
<div class="t" style="left:1418px;top:487.4px;font-size:13px;letter-spacing:.1px;color:#c8ccd0">00:00:27:27</div>

<!-- CONTROLS -->
<svg width="760" height="30" viewBox="0 0 760 30" style="left:750px;top:515px">
 <g class="ic" stroke-width="1.4" stroke="#c9cdd1">
  <path d="M31.4 8.6 L21 15 L31.4 21.4Z M34.6 9 V21"/>
  <path d="M65.4 8.6 L75.8 15 L65.4 21.4Z M62.2 9 V21"/>
  <path d="M103.4 8.4 L116 15 L103.4 21.6Z"/>
  <rect x="141.8" y="8.8" width="12.6" height="12.6" rx="1"/>
  <path d="M531 8.4 C528.6 8.4 528.4 9.4 528.4 11 V12.6 C528.4 14 527.6 15 526.2 15 C527.6 15 528.4 16 528.4 17.4 V19 C528.4 20.6 528.6 21.6 531 21.6" stroke-width="1.2"/>
  <path d="M567 8.4 C569.4 8.4 569.6 9.4 569.6 11 V12.6 C569.6 14 570.4 15 571.8 15 C570.4 15 569.6 16 569.6 17.4 V19 C569.6 20.6 569.4 21.6 567 21.6" stroke-width="1.2"/>
  <!-- gear -->
  <g transform="translate(608.4,15.2)" stroke-width="1.3">
   <path d="M-1.5 -7.2 h3 l.5 2 l1.6 .9 l2 -.6 l1.5 2.6 l-1.5 1.4 v1.8 l1.5 1.4 l-1.5 2.6 l-2 -.6 l-1.6 .9 l-.5 2 h-3 l-.5 -2 l-1.6 -.9 l-2 .6 l-1.5 -2.6 l1.5 -1.4 v-1.8 l-1.5 -1.4 l1.5 -2.6 l2 .6 l1.6 -.9z"/>
   <circle r="2.2"/>
   <path d="M8.4 7.8 V4.6 L5.2 7.8Z" fill="#c9cdd1" stroke="none"/>
  </g>
  <!-- camera -->
  <path d="M642.6 11.2 H645.4 L646.8 8.8 H651.4 L652.8 11.2 H655.6 V21 H642.6Z" stroke-width="1.3"/><circle cx="649.1" cy="15.8" r="3" stroke-width="1.3"/>
  <!-- speaker -->
  <path d="M681.4 12.2 H684.6 L689.2 8.4 V21.6 L684.6 17.8 H681.4Z" stroke-width="1.3"/>
  <path d="M692 11.6 C693.4 13.4 693.4 16.6 692 18.4 M694.6 9.4 C697.2 12.4 697.2 17.6 694.6 20.6" stroke-width="1.2"/>
  <!-- expand -->
  <path d="M723.6 13.2 V9.6 H727.2 M723.8 9.8 L727.6 13.6 M734.8 16.8 V20.4 H731.2 M734.6 20.2 L730.8 16.4" stroke-width="1.3"/>
 </g>
</svg>
<!-- RIGHT PANEL -->
<div class="t" style="left:1531.5px;top:62px;font-size:11.5px;color:#d6d9dc">形狀</div>
<div class="t" style="left:1591px;top:62px;font-size:11.5px;color:#55e8c8;font-weight:500">動畫</div>
<div class="a" style="left:1572px;top:49px;width:76px;height:41.7px;border:5px solid #56e0c2;border-radius:4px"></div>
<div class="a" style="left:1513px;top:130px;width:400px;height:1px;background:#22262a"></div>
<div class="t" style="left:1536px;top:106px;font-size:11.5px;color:#d6d9dc">動態預設</div>
<div class="a" style="left:1602px;top:101px;width:92px;height:24px;border-radius:6px;background:#2e3337"></div>
<div class="t" style="left:1613px;top:106px;font-size:11.5px;color:#f0f2f4">關鍵影格預設</div>
<div class="a" style="left:1529px;top:141px;width:368px;height:40px;border-radius:6px;background:#2c3238"></div>
<div class="t" style="left:1573.5px;top:154px;font-size:11.5px;color:#eceef0">關鍵影格預設功能即將停止服務</div>
<div class="t" style="left:1830px;top:154px;font-size:11.5px;color:#55e8c8">回饋</div>
<svg width="400" height="60" viewBox="0 0 400 60" style="left:1513px;top:131px">
 <g class="ic" stroke-width="1.1" stroke="#d0d4d8">
  <circle cx="40" cy="30" r="6.6"/><path d="M40 26.4 V31"/><circle cx="40" cy="33.4" r=".5" fill="#d0d4d8"/>
  <path d="M355.4 25.2 L364.8 34.6 M364.8 25.2 L355.4 34.6" stroke-width="1.2"/>
 </g>
</svg>

<!-- cards -->
<div class="card" style="left:1530px;top:190px"></div>
<div class="card" style="left:1639px;top:190px"></div>
<div class="card" style="left:1748px;top:190px"></div>
<div class="card" style="left:1530px;top:278px;box-shadow:0 0 0 1.6px #7eecd6;border-radius:6px"></div>
<div class="card" style="left:1639px;top:278px"></div>
<div class="card" style="left:1748px;top:278px"></div>
<div class="card" style="left:1530px;top:366px"></div>
<div class="card" style="left:1639px;top:366px"></div>
<div class="card" style="left:1748px;top:366px"></div>
<div class="card" style="left:1530px;top:454px"></div>
<div class="card" style="left:1639px;top:454px"></div>
<div class="lbl" style="left:1580.5px;top:253px">淡入</div>
<div class="lbl" style="left:1689.5px;top:253px">淡出</div>
<div class="lbl" style="left:1798.5px;top:253px">暫停</div>
<div class="lbl" style="left:1580.5px;top:341px">右滑出現</div>
<div class="lbl" style="left:1689.5px;top:341px">左滑出現</div>
<div class="lbl" style="left:1798.5px;top:341px">上滑出現</div>
<div class="lbl" style="left:1580.5px;top:429px">下滑出現</div>
<div class="lbl" style="left:1689.5px;top:429px">旋轉出現</div>
<div class="lbl" style="left:1798.5px;top:429px">旋轉消失</div>
<div class="lbl" style="left:1580.5px;top:517px">放大</div>
<div class="lbl" style="left:1689.5px;top:517px">縮小</div>

<svg width="1920" height="970" viewBox="0 0 1920 970" style="left:0;top:0">
 <defs>
  <g id="rarr"><path d="M-5.6 0 H5 M1.4 -3.6 L5.2 0 L1.4 3.6" fill="none" stroke-width="1.2" stroke-linecap="round" stroke-linejoin="round"/></g>
  <g id="carr"><path d="M2.87 -14.50 A5.0 5.0 0 1 0 -4.70 -20.31" fill="none" stroke="#d4d8dc" stroke-width="1.2" stroke-linecap="round"/><path d="M-5.45 -18.24 L-6.75 -21.69 L-2.24 -20.05Z" fill="#d4d8dc"/></g>
<g id="carr2"><path d="M-5.69 -22.81 A5.0 5.0 0 1 1 0.72 -15.43" fill="none" stroke="#d4d8dc" stroke-width="1.2" stroke-linecap="round"/><path d="M-1.20 -14.36 L0.09 -17.82 L2.41 -13.62Z" fill="#d4d8dc"/></g>
 </defs>
 <!-- fade in -->
 <path d="M1558.8 213.6 V235.8 H1595" fill="none" stroke="#4b5361" stroke-width="1.2"/>
 <rect x="1563.4" y="207.6" width="35" height="24" fill="#727e90" stroke="#d5d8dc" stroke-width="1"/>
 <!-- fade out -->
 <path d="M1669.4 211 V235.4 H1705" fill="none" stroke="#e4e6e9" stroke-width="1.2"/>
 <rect x="1673.4" y="206.8" width="35.4" height="24" fill="#727e90" stroke="#d5d8dc" stroke-width="1"/>
 <!-- pause -->
 <g stroke="#d8dbde" fill="none" stroke-width="1.2">
  <path d="M1770.6 219.2 h1.4 M1774.2 219.2 h1.4" />
  <use href="#rarr" x="1783.8" y="219.2"/>
  <path d="M1795 212 V227.6 M1802 212 V227.6" stroke-width="1.3"/>
  <path d="M1809 219.2 h1.4 M1812.6 219.2 h1.4"/>
  <use href="#rarr" x="1822.4" y="219.2"/>
 </g>
 <!-- slide right -->
 <g stroke="#aeb4bc" fill="none" stroke-width="1.1">
  <path d="M1542 308 h1.4 M1545.4 308 h1.4"/><use href="#rarr" x="1555.6" y="308"/>
 </g>
 <rect x="1563.4" y="296.4" width="34.8" height="22.6" fill="#727e90" stroke="#d5d8dc" stroke-width="1"/>
 <!-- slide left -->
 <rect x="1672.2" y="297.2" width="34.8" height="22.4" fill="#727e90" stroke="#d5d8dc" stroke-width="1"/>
 <g stroke="#aeb4bc" fill="none" stroke-width="1.1">
  <use href="#rarr" x="1715" y="308" transform="rotate(180 1715 308)"/><path d="M1722.4 308 h1.4 M1725.8 308 h1.4"/>
 </g>
 <!-- slide up -->
 <rect x="1781.4" y="296.4" width="34.8" height="22.6" fill="#727e90" stroke="#d5d8dc" stroke-width="1"/>
 <g stroke="#aeb4bc" fill="none" stroke-width="1.1">
  <use href="#rarr" x="1798.6" y="326.8" transform="rotate(-90 1798.6 326.8)"/><path d="M1798.6 333.6 v1.2 M1798.6 336.4 v1.2"/>
 </g>
 <!-- slide down -->
 <rect x="1563.4" y="385.4" width="34.8" height="22.6" fill="#727e90" stroke="#d5d8dc" stroke-width="1"/>
 <g stroke="#aeb4bc" fill="none" stroke-width="1.1">
  <use href="#rarr" x="1580.6" y="376.6" transform="rotate(90 1580.6 376.6)"/><path d="M1580.6 366.4 v1.2 M1580.6 369 v1.2"/>
 </g>
 <!-- rotate in -->
 <g transform="translate(1689.5,395.8)">
  <g transform="rotate(-20)"><rect x="-10.2" y="-7" width="20.4" height="14" fill="#4c5b73"/><rect x="-3.6" y="-2.4" width="7.2" height="4.8" fill="#b4bbc8"/></g>
  <use href="#carr"/><use href="#carr" transform="rotate(-90)"/><use href="#carr" transform="rotate(180)"/><use href="#carr" transform="rotate(90)"/>
 </g>
 <!-- rotate out -->
 <g transform="translate(1798.5,395.8)">
  <g transform="rotate(-20)"><rect x="-10.2" y="-7" width="20.4" height="14" fill="#4c5b73"/><rect x="-3.6" y="-2.4" width="7.2" height="4.8" fill="#b4bbc8"/></g>
  <use href="#carr2"/><use href="#carr2" transform="rotate(-90)"/><use href="#carr2" transform="rotate(180)"/><use href="#carr2" transform="rotate(90)"/>
 </g>
 <!-- zoom in -->
 <rect x="1555.2" y="467.4" width="50.4" height="33.6" fill="#28303c" stroke="#8a94a4" stroke-width="1"/>
 <rect x="1570.4" y="478" width="20.4" height="12.4" fill="#6c7a8e"/>
 <g stroke="#e2e5e8" fill="none" stroke-width="1.1" stroke-linecap="round" stroke-linejoin="round">
  <path d="M1568.4 476.4 L1557.6 469.8" stroke-dasharray="1.6 1.4"/><path d="M1557.4 474 V469.6 H1562"/>
  <path d="M1592.8 476.4 L1603.4 469.8" stroke-dasharray="1.6 1.4"/><path d="M1603.6 474 V469.6 H1599"/>
  <path d="M1568.4 492 L1557.6 498.6" stroke-dasharray="1.6 1.4"/><path d="M1557.4 494.4 V498.8 H1562"/>
  <path d="M1592.8 492 L1603.4 498.6" stroke-dasharray="1.6 1.4"/><path d="M1603.6 494.4 V498.8 H1599"/>
 </g>
 <!-- zoom out -->
 <rect x="1664.2" y="467.4" width="50.4" height="33.6" fill="#28303c" stroke="#8a94a4" stroke-width="1"/>
 <rect x="1679.4" y="478" width="20.4" height="12.4" fill="#6c7a8e"/>
 <g stroke="#e2e5e8" fill="none" stroke-width="1.1" stroke-linecap="round" stroke-linejoin="round">
  <path d="M1666.6 469.8 L1676.6 476" stroke-dasharray="1.6 1.4"/><path d="M1677.6 472 V476.6 H1673"/>
  <path d="M1712.2 469.8 L1702.2 476" stroke-dasharray="1.6 1.4"/><path d="M1701.6 472 V476.6 H1706.2"/>
  <path d="M1666.6 498.6 L1676.6 492.4" stroke-dasharray="1.6 1.4"/><path d="M1677.6 496.4 V491.8 H1673"/>
  <path d="M1712.2 498.6 L1702.2 492.4" stroke-dasharray="1.6 1.4"/><path d="M1701.6 496.4 V491.8 H1706.2"/>
 </g>
</svg>

<!-- big highlight -->
<div class="a" style="left:1512px;top:92px;width:403px;height:470px;border:5px solid #56e0c2;border-radius:4px"></div>
<!-- reset -->
<div class="a" style="left:1858px;top:932px;width:39px;height:24px;border-radius:6px;background:#4a5560"></div>
<div class="t" style="left:1866.5px;top:937px;font-size:11px;color:#f0f2f4">重設</div>
<!-- TIMELINE -->
<div class="a" style="left:7px;top:677px;width:1484px;height:70px;background:#212427"></div>
<div class="a" style="left:7px;top:747px;width:1484px;height:70px;background:#25282c"></div>
<div class="a" style="left:7px;top:817px;width:1484px;height:70px;background:#212427"></div>
<div class="a" style="left:7px;top:887px;width:1484px;height:45px;background:#25282c"></div>
<div class="a" style="left:7px;top:677px;width:104px;height:70px;background:#25282c"></div>
<div class="a" style="left:7px;top:747px;width:104px;height:70px;background:#282b2f"></div>
<div class="a" style="left:7px;top:817px;width:104px;height:70px;background:#25282c"></div>
<div class="a" style="left:7px;top:887px;width:104px;height:45px;background:#282b2f"></div>
<div class="tname" style="top:695.5px">影片 3</div>
<div class="tname" style="top:765.5px">影片 2</div>
<div class="tname" style="top:835.5px">影片 1</div>
<div class="tname" style="top:892.5px">音訊 1</div>
<div class="t" style="left:111px;top:600.4px;font-size:9.4px;font-weight:bold;letter-spacing:.1px;transform:scaleX(1.26);transform-origin:0 50%;color:#7c8288">00:00</div>
<div class="t" style="left:350.2px;top:600.4px;font-size:9.4px;font-weight:bold;letter-spacing:.1px;transform:scaleX(1.26);transform-origin:0 50%;color:#7c8288">00:05</div>
<div class="t" style="left:590.2px;top:600.4px;font-size:9.4px;font-weight:bold;letter-spacing:.1px;transform:scaleX(1.26);transform-origin:0 50%;color:#7c8288">00:10</div>
<div class="t" style="left:830.2px;top:600.4px;font-size:9.4px;font-weight:bold;letter-spacing:.1px;transform:scaleX(1.26);transform-origin:0 50%;color:#7c8288">00:15</div>
<div class="t" style="left:1070.2px;top:600.4px;font-size:9.4px;font-weight:bold;letter-spacing:.1px;transform:scaleX(1.26);transform-origin:0 50%;color:#7c8288">00:20</div>
<div class="t" style="left:1310.2px;top:600.4px;font-size:9.4px;font-weight:bold;letter-spacing:.1px;transform:scaleX(1.26);transform-origin:0 50%;color:#7c8288">00:25</div>
<svg width="1920" height="970" viewBox="0 0 1920 970" style="left:0;top:0">
<defs>
<filter id="fb" x="-10%" y="-10%" width="120%" height="120%"><feGaussianBlur stdDeviation="0.9"/></filter>
<pattern id="pbeach" x="111" y="837" width="51.55" height="29" patternUnits="userSpaceOnUse"><rect width="51.55" height="29" fill="#9cc0e2"/><rect width="51.55" height="6" fill="#7fabdc"/><ellipse cx="14" cy="4.6" rx="9" ry="1.6" fill="#e4edf5" opacity=".8"/><ellipse cx="38" cy="3" rx="8" ry="1.4" fill="#dbe7f2" opacity=".7"/><rect y="9.6" width="51.55" height="9" fill="#3a8db6"/><path d="M0 13 L26 11.4 L36 12 L30 15 L10 18 L0 18Z" fill="#6fb3c6"/><path d="M25 10.6 L34 8.4 L44 5.6 L51.55 3.4 V14 L40 13 L30 11.6Z" fill="#34603a"/><path d="M38 8 L44 6.4 L47 7.4 L44 9.6Z" fill="#7a5a48"/><path d="M0 18 C4 15.6 8 18.6 12 17 C16 15 20 18 24 17 C30 14 36 14.6 42 13 C46 11.6 49 11 51.55 10.6 V29 H0Z" fill="#3f7030"/><path d="M13 20.6 L20 18.8 L22 20 L16 22Z" fill="#d4caa8"/><path d="M0 22.6 C6 19.6 12 22 18 21.6 C24 23 28 19.6 34 20 C40 18 46 18 51.55 16.6 V29 H0Z" fill="#4a8232"/><ellipse cx="7" cy="26.4" rx="8" ry="3.2" fill="#30601f"/><ellipse cx="40" cy="24" rx="9" ry="3.6" fill="#528a36"/></pattern>
<pattern id="pf1" x="523.4" y="837" width="51.55" height="29" patternUnits="userSpaceOnUse"><rect width="51.55" height="29" fill="#2d4526"/><rect width="18" height="29" fill="#1f3019"/><ellipse cx="9" cy="12" rx="7" ry="11" fill="#2a4222"/><path d="M18 0 H24.6 L25.4 8 L24 17 L21 19 L19.6 10Z" fill="#eef3ec"/><path d="M14 0 L17 0 L16.4 5Z M31 0 H36 L34 4Z" fill="#dde6da"/><ellipse cx="44" cy="13" rx="7" ry="12" fill="#385630"/><path d="M47 0 H51.55 V5 L49 6Z" fill="#e4ebe0"/><rect y="27" width="51.55" height="2" fill="#5c4c3c"/><path d="M25.6 17 C26 13.6 32 13.2 34 15 L37 18 L37.6 29 H25.4Z" fill="#0c0e0e"/><path d="M34.6 19 L37.4 19.4 L37.8 29 H35.4Z" fill="#a47a5e"/><circle cx="29.4" cy="9.6" r="2.7" fill="#17130f"/><path d="M26.6 10 L29 9.6 L30.6 13.6 L28 14.4 L26.8 12.6Z" fill="#b08468"/><rect x="0" width=".7" height="29" fill="#141c12" opacity=".6"/></pattern>
<pattern id="pf2" x="1039" y="837" width="51.55" height="29" patternUnits="userSpaceOnUse"><rect width="51.55" height="29" fill="#1d2d19"/><ellipse cx="10" cy="12" rx="9" ry="12" fill="#273f20"/><ellipse cx="44" cy="15" rx="8" ry="12" fill="#2c4824"/><path d="M26 0 H37 L35.6 5 L31 7.6 L27.6 4.6Z" fill="#c9d6c6"/><path d="M40 0 H44 L42 3Z M17 0 H20 L18 4Z" fill="#b9c8b6"/><rect y="27.4" width="51.55" height="1.6" fill="#3c3428"/><path d="M21 14 C22 10.6 28 10.4 29.6 13.4 L34 17.4 L35 29 H21.4 L20.4 19Z" fill="#0b0d0d"/><circle cx="26" cy="9" r="2.7" fill="#15110e"/><path d="M17.4 10.4 h6.6 v3.6 h-6.6z" fill="#0e0e0e"/><path d="M19 14 l6 1.4 l-1 3.6 l-6 -2.4z" fill="#a47a5e"/><rect x="0" width=".7" height="29" fill="#101710" opacity=".6"/></pattern>
</defs>
<path d="M111.5 616V625M351.5 616V625M591.5 616V625M831.5 616V625M1071.5 616V625M1311.5 616V625" stroke="#8a9096" stroke-width="1.1" fill="none"/>
<path d="M159.5 620V625M207.5 620V625M255.5 620V625M303.5 620V625M399.5 620V625M447.5 620V625M495.5 620V625M543.5 620V625M639.5 620V625M687.5 620V625M735.5 620V625M783.5 620V625M879.5 620V625M927.5 620V625M975.5 620V625M1023.5 620V625M1119.5 620V625M1167.5 620V625M1215.5 620V625M1263.5 620V625M1359.5 620V625M1407.5 620V625M1455.5 620V625" stroke="#5c6268" stroke-width="1" fill="none"/>
<path d="M111 823 a4 4 0 0 1 4 -4 H1447 a4 4 0 0 1 4 4 V837 H111Z" fill="#257a68"/>
<rect x="111" y="837" width="412.4" height="29" fill="url(#pbeach)"/>
<rect x="523.4" y="837" width="515.6" height="29" fill="url(#pf1)"/>
<rect x="1039" y="837" width="412" height="29" fill="url(#pf2)"/>
<path d="M111 866 H1451 V881 a4 4 0 0 1 -4 4 H115 a4 4 0 0 1 -4 -4Z" fill="#163d35"/>
<rect x="111" y="871.2" width="1340" height="1.5" fill="#86ecd4"/>
<path d="M111 885L111.0 884.4L113.2 884.4L115.4 884.3L117.6 884.3L119.8 883.6L122.0 883.5L124.2 883.6L126.4 882.9L128.6 883.5L130.8 883.0L133.0 883.5L135.2 883.5L137.4 883.0L139.6 882.4L141.8 883.4L144.0 883.3L146.2 882.7L148.4 882.3L150.6 882.8L152.8 883.0L155.0 882.2L157.2 883.5L159.4 882.4L161.6 883.2L163.8 883.4L166.0 883.4L168.2 883.2L170.4 882.5L172.6 883.3L174.8 882.8L177.0 882.7L179.2 883.1L181.4 882.8L183.6 883.5L185.8 883.5L188.0 883.3L190.2 882.6L192.4 883.0L194.6 883.2L196.8 882.8L199.0 883.0L201.2 883.2L203.4 882.5L205.6 882.6L207.8 883.3L210.0 882.8L212.2 882.9L214.4 882.4L216.6 882.6L218.8 883.2L221.0 882.2L223.2 883.4L225.4 883.0L227.6 882.5L229.8 883.4L232.0 882.9L234.2 883.5L236.4 882.7L238.6 882.5L240.8 882.8L243.0 882.4L245.2 883.2L247.4 882.6L249.6 882.8L251.8 882.8L254.0 883.0L256.2 882.4L258.4 882.3L260.6 882.9L262.8 882.7L265.0 883.5L267.2 882.6L269.4 882.7L271.6 882.2L273.8 882.4L276.0 883.2L278.2 883.1L280.4 882.7L282.6 883.6L284.8 883.0L287.0 883.4L289.2 883.4L291.4 883.5L293.6 882.5L295.8 883.4L298.0 883.3L300.2 883.1L302.4 882.4L304.6 883.5L306.8 883.0L309.0 882.8L311.2 882.4L313.4 882.5L315.6 882.4L317.8 883.2L320.0 883.0L322.2 883.1L324.4 882.4L326.6 882.3L328.8 883.4L331.0 883.4L333.2 883.3L335.4 883.3L337.6 882.9L339.8 882.8L342.0 883.2L344.2 883.6L346.4 883.0L348.6 883.1L350.8 882.8L353.0 882.3L355.2 882.6L357.4 882.9L359.6 882.7L361.8 882.7L364.0 883.5L366.2 882.3L368.4 882.5L370.6 882.4L372.8 882.5L375.0 883.1L377.2 883.0L379.4 883.5L381.6 882.7L383.8 883.5L386.0 883.5L388.2 883.3L390.4 883.4L392.6 883.1L394.8 883.5L397.0 883.6L399.2 883.4L401.4 883.5L403.6 883.1L405.8 883.6L408.0 882.4L410.2 882.7L412.4 883.4L414.6 883.2L416.8 883.1L419.0 883.1L421.2 883.4L423.4 882.4L425.6 882.2L427.8 882.9L430.0 882.9L432.2 883.5L434.4 883.5L436.6 883.1L438.8 883.2L441.0 882.4L443.2 883.4L445.4 883.6L447.6 882.3L449.8 882.9L452.0 883.4L454.2 882.8L456.4 883.6L458.6 882.9L460.8 882.2L463.0 882.4L465.2 882.6L467.4 883.2L469.6 883.1L471.8 883.4L474.0 882.5L476.2 882.9L478.4 882.5L480.6 883.1L482.8 883.3L485.0 882.5L487.2 882.2L489.4 882.4L491.6 882.5L493.8 882.5L496.0 882.6L498.2 883.3L500.4 882.9L502.6 883.1L504.8 883.6L507.0 883.7L509.2 883.6L511.4 883.9L513.6 883.9L515.8 884.2L518.0 884.4L520 885ZM542 885L542.0 884.4L544.2 884.1L546.4 883.3L548.6 883.5L550.8 883.3L553.0 882.9L555.2 882.6L557.4 882.4L559.6 880.8L561.8 879.8L564.0 880.0L566.2 881.4L568.4 880.7L570.6 880.2L572.8 882.9L575.0 880.7L577.2 879.7L579.4 880.2L581.6 880.3L583.8 881.4L586.0 882.5L588.2 880.2L590.4 881.9L592.6 880.2L594.8 879.5L597.0 881.7L599.2 881.7L601.4 879.6L603.6 880.4L605.8 882.6L608.0 882.7L610.2 882.6L612.4 879.8L614.6 880.1L616.8 882.6L619.0 880.1L621.2 879.5L623.4 880.7L625.6 881.9L627.8 881.1L630.0 882.7L632.2 883.1L634.4 879.5L636.6 880.7L638.8 881.2L641.0 879.7L643.2 881.6L645.4 879.9L647.6 880.1L649.8 882.4L652.0 882.2L654.2 882.1L656.4 882.3L658.6 881.0L660.8 882.2L663.0 881.6L665.2 882.7L667.4 879.7L669.6 881.9L671.8 881.5L674.0 881.0L676.2 879.8L678.4 881.6L680.6 879.7L682.8 881.3L685.0 881.2L687.2 881.2L689.4 883.1L691.6 881.5L693.8 882.5L696.0 883.2L698.2 880.2L700.4 882.5L702.6 881.4L704.8 880.4L707.0 881.1L709.2 882.0L711.4 881.2L713.6 881.1L715.8 880.2L718.0 882.8L720.2 881.1L722.4 882.3L724.6 882.1L726.8 880.3L729.0 881.3L731.2 881.1L733.4 881.1L735.6 881.5L737.8 883.2L740.0 883.5L742.2 884.3L744.4 884.4L745 885ZM790 885L790.0 884.4L792.2 884.4L794.4 884.4L796 885ZM820 885L820.0 884.4L822.2 884.2L824.4 883.6L826.6 882.6L828.8 881.6L831.0 882.8L833.2 881.3L835.4 879.6L837.6 880.0L839.8 882.7L842.0 882.7L844.2 881.5L846.4 882.9L848.6 882.3L850.8 882.9L853.0 880.7L855.2 880.2L857.4 879.8L859.6 882.6L861.8 880.5L864.0 880.7L866.2 882.7L868.4 879.8L870.6 879.5L872.8 882.4L875.0 879.6L877.2 881.7L879.4 881.3L881.6 879.4L883.8 880.0L886.0 882.6L888.2 881.6L890.4 881.2L892.6 881.9L894.8 882.5L897.0 882.0L899.2 880.5L901.4 883.1L903.6 881.1L905.8 881.5L908.0 883.1L910.2 881.9L912.4 880.8L914.6 881.3L916.8 883.0L919.0 879.5L921.2 880.2L923.4 879.5L925.6 882.8L927.8 882.2L930.0 883.0L932.2 880.2L934.4 882.2L936.6 882.7L938.8 881.6L941.0 879.7L943.2 880.1L945.4 882.2L947.6 882.6L949.8 879.7L952.0 881.0L954.2 880.5L956.4 882.9L958.6 883.0L960.8 880.6L963.0 881.6L965.2 882.9L967.4 879.6L969.6 880.8L971.8 880.2L974.0 882.9L976.2 879.9L978.4 882.9L980.6 879.9L982.8 881.5L985.0 881.9L987.2 881.1L989.4 879.7L991.6 882.2L993.8 882.7L996.0 881.2L998.2 882.3L1000.4 883.2L1002.6 883.4L1004.8 884.0L1007.0 884.1L1009.2 884.4L1011.4 884.4L1012 885ZM1068 885L1068.0 884.4L1070.2 884.4L1072.4 884.4L1074 885ZM1098 885L1098.0 884.4L1100.2 884.4L1102.4 884.4L1104.6 883.7L1106.8 883.8L1109.0 881.4L1111.2 881.3L1113.4 882.5L1115.6 881.4L1117.8 879.6L1120.0 882.8L1122.2 880.1L1124.4 881.6L1126.6 881.3L1128.8 880.0L1131.0 881.7L1133.2 881.3L1135.4 880.6L1137.6 879.5L1139.8 881.9L1142.0 880.0L1144.2 880.5L1146.4 880.8L1148.6 881.7L1150.8 881.9L1153.0 883.0L1155.2 882.7L1157.4 882.9L1159.6 880.4L1161.8 882.2L1164.0 882.6L1166.2 882.9L1168.4 880.0L1170.6 879.9L1172.8 880.7L1175.0 882.1L1177.2 882.3L1179.4 882.1L1181.6 881.5L1183.8 882.6L1186.0 881.5L1188.2 882.2L1190.4 879.5L1192.6 879.5L1194.8 881.1L1197.0 882.3L1199.2 879.5L1201.4 882.0L1203.6 881.8L1205.8 883.2L1208.0 881.7L1210.2 881.4L1212.4 881.3L1214.6 882.4L1216.8 881.3L1219.0 883.2L1221.2 882.2L1223.4 882.9L1225.6 881.7L1227.8 883.0L1230.0 883.1L1232.2 882.0L1234.4 882.3L1236.6 881.0L1238.8 881.2L1241.0 880.3L1243.2 880.7L1245.4 880.5L1247.6 879.9L1249.8 881.7L1252.0 882.0L1254.2 879.5L1256.4 882.6L1258.6 880.4L1260.8 880.8L1263.0 883.0L1265.2 880.0L1267.4 879.8L1269.6 880.8L1271.8 880.4L1274.0 880.1L1276.2 882.7L1278.4 881.2L1280.6 881.3L1282.8 880.0L1285.0 880.1L1287.2 880.1L1289.4 881.4L1291.6 881.1L1293.8 882.4L1296.0 883.1L1298.2 884.3L1300.4 884.4L1302 885ZM1350 885L1350.0 884.4L1352.2 884.4L1354.4 884.4L1356 885Z" fill="#2f8f78"/>
<rect x="117" y="823.2" width="11.6" height="9.8" rx="1.6" fill="#b9d6ce"/><path d="M121 825.6 L125.6 828.1 L121 830.6Z" fill="#257a68"/>
<rect x="665" y="680" width="237.4" height="64" rx="3.4" fill="#8c4245" stroke="#f4f4f4" stroke-width="2"/>
<rect x="715" y="681.6" width="13.4" height="13.2" rx="2.6" fill="#dccfd2"/><path d="M721.7 684.2 L725.7 688.2 L721.7 692.2 L717.7 688.2Z" fill="#8c4245"/>
<path d="M711 712.6 L716.2 717.8 L711 723 L705.8 717.8Z" fill="#fff" stroke="#fff" stroke-width="1" stroke-linejoin="round"/>
<path d="M666 713.4 L669.6 717.8 L666 722.2Z" fill="#fff"/>
<g fill="none" stroke="#f0e4e4" stroke-width="1.4"><path d="M673 687 a3.4 3.4 0 0 1 6.8 0 v4"/><path d="M676 692 v-3.4 a1.6 1.6 0 0 1 3.2 0"/></g>
<rect x="661.7" y="600" width="2.5" height="352" fill="#f96666"/>
<rect x="663" y="626.4" width="240" height="2.4" fill="#f96666"/>
<path d="M656.8 599.4 a2.4 2.4 0 0 1 2.4 -2.4 h7.4 a2.4 2.4 0 0 1 2.4 2.4 v3.8 c0 2.4 -3.6 4 -6.1 5.4 c-2.5 -1.4 -6.1 -3 -6.1 -5.4Z" fill="#fa6060"/>
<rect x="652.2" y="664" width="21.6" height="35" rx="10.8" fill="#fb6666"/>
<g fill="none" stroke="#fff" stroke-width="1.1" stroke-linecap="round"><path d="M659 674.2 L665.6 683.4 M667 674.2 L660.4 683.4"/><ellipse cx="658.7" cy="685.6" rx="2.6" ry="4" transform="rotate(-24 658.7 685.6)"/><ellipse cx="667.3" cy="685.6" rx="2.6" ry="4" transform="rotate(24 667.3 685.6)"/></g>
<rect x="1493" y="628.6" width="11" height="304" rx="5.5" fill="#2e3339"/>
<circle cx="1498.5" cy="634.6" r="5" fill="#59616b"/><circle cx="1498.5" cy="926.4" r="5" fill="#59616b"/>
<rect x="111" y="954.4" width="446" height="11.4" rx="5.7" fill="#2e3339"/>
<circle cx="116.6" cy="960.2" r="5" fill="#59616b"/><circle cx="551.4" cy="960.2" r="5" fill="#59616b"/>
<path d="M54 959.6 H63 M58.5 955.1 V964.1" stroke="#d4d7da" stroke-width="1.1" fill="none"/>
<g class="ic" stroke="#d0d4d8" stroke-width="1.1"><rect x="17.8" y="720.4" width="10" height="6.8" rx=".6"/><path d="M19.6 720.4 v-1.6 a2 2 0 0 1 4 -.4"/><circle cx="22.8" cy="723.8" r=".5" fill="#d0d4d8"/><path d="M41.2 720.2 h2.4 l3.6 -3 v10.4 l-3.6 -3 h-2.4z"/><path d="M49.4 719.8 c1 1.2 1 3.6 0 4.8 M51.2 718.2 c1.8 2.2 1.8 5.8 0 8"/><path d="M65.2 722 c3 -5 9 -5 12 0 c-3 5 -9 5 -12 0z"/><circle cx="71.2" cy="722" r="2" fill="#d0d4d8" stroke="none"/></g>
<g class="ic" stroke="#d0d4d8" stroke-width="1.1"><rect x="17.8" y="790.4" width="10" height="6.8" rx=".6"/><path d="M19.6 790.4 v-1.6 a2 2 0 0 1 4 -.4"/><circle cx="22.8" cy="793.8" r=".5" fill="#d0d4d8"/><path d="M41.2 790.2 h2.4 l3.6 -3 v10.4 l-3.6 -3 h-2.4z"/><path d="M49.4 789.8 c1 1.2 1 3.6 0 4.8 M51.2 788.2 c1.8 2.2 1.8 5.8 0 8"/><path d="M65.2 792 c3 -5 9 -5 12 0 c-3 5 -9 5 -12 0z"/><circle cx="71.2" cy="792" r="2" fill="#d0d4d8" stroke="none"/></g>
<g class="ic" stroke="#d0d4d8" stroke-width="1.1"><rect x="17.8" y="860.4" width="10" height="6.8" rx=".6"/><path d="M19.6 860.4 v-1.6 a2 2 0 0 1 4 -.4"/><circle cx="22.8" cy="863.8" r=".5" fill="#d0d4d8"/><path d="M41.2 860.2 h2.4 l3.6 -3 v10.4 l-3.6 -3 h-2.4z"/><path d="M49.4 859.8 c1 1.2 1 3.6 0 4.8 M51.2 858.2 c1.8 2.2 1.8 5.8 0 8"/><path d="M65.2 862 c3 -5 9 -5 12 0 c-3 5 -9 5 -12 0z"/><circle cx="71.2" cy="862" r="2" fill="#d0d4d8" stroke="none"/></g>
<g class="ic" stroke="#d0d4d8" stroke-width="1.1"><rect x="17.8" y="917.4" width="10" height="6.8" rx=".6"/><path d="M19.6 917.4 v-1.6 a2 2 0 0 1 4 -.4"/><circle cx="22.8" cy="920.8" r=".5" fill="#d0d4d8"/><path d="M41.2 917.2 h2.4 l3.6 -3 v10.4 l-3.6 -3 h-2.4z"/><path d="M49.4 916.8 c1 1.2 1 3.6 0 4.8 M51.2 915.2 c1.8 2.2 1.8 5.8 0 8"/></g>
</svg>
<div class="t" style="left:685px;top:680.6px;font-size:11.5px;color:#fff">矩形</div>
<div class="t" style="left:133.4px;top:821.4px;font-size:10.5px;color:#d6ece6;letter-spacing:.2px">video-miao</div>
<!-- TIMELINE TOOLBAR ICONS -->
<svg width="1920" height="970" viewBox="0 0 1920 970" style="left:0;top:0">
<defs>
 <linearGradient id="gnew" x1="0" y1="0" x2="1" y2="1"><stop offset="0" stop-color="#ff9a5a"/><stop offset=".5" stop-color="#ff5fa8"/><stop offset="1" stop-color="#e84cf0"/></linearGradient>
 <linearGradient id="gbot" x1="0" y1="0" x2="0" y2="1"><stop offset="0" stop-color="#3fd2ec"/><stop offset="1" stop-color="#45efb4"/></linearGradient>
</defs>
<g class="ic" stroke="#c9cdd1" stroke-width="1.3">
 <!-- grid -->
 <rect x="20.4" y="569.6" width="5" height="5" rx=".8"/><rect x="20.4" y="577.4" width="5" height="5" rx=".8"/><rect x="28.6" y="577.4" width="5" height="5" rx=".8"/>
 <rect x="28.9" y="569.9" width="4.4" height="4.4" rx=".8" transform="rotate(45 31.1 572.1)"/>
 <path d="M51.5 568 V584" stroke="#3c4146" stroke-width="1.1"/>
 <!-- cursor -->
 <path d="M69.6 569.6 L80.6 574 L76.2 576 L79.8 580 L78 581.4 L74.6 577.4 L72.2 580.8Z"/>
 <path d="M84.6 581.4 V584.4 H81.6Z" fill="#c9cdd1" stroke="none"/>
 <!-- undo -->
 <path d="M108.8 570 L105.6 573.4 L108.8 576.8 M106 573.4 H114.2 C120 573.4 120 581.6 114.2 581.6 H109.4"/>
 <!-- redo dim -->
 <path d="M147.2 570 L150.4 573.4 L147.2 576.8 M150 573.4 H141.8 C136 573.4 136 581.6 141.8 581.6 H146.6" stroke="#4a5056"/>
 <!-- trash -->
 <path d="M169.4 572 H182.6 M173 572 C173 569.2 179 569.2 179 572 M171 572.4 V580.6 C171 582.2 171.8 583 173.4 583 H178.6 C180.2 583 181 582.2 181 580.6 V572.4 M174.4 575 V580.2 M177.6 575 V580.2"/>
 <!-- scissors -->
 <path d="M203.6 569.6 L211.4 579.6 M211.6 569.6 L203.8 579.6"/><circle cx="202.8" cy="580.6" r="2.4"/><circle cx="212.4" cy="580.6" r="2.4"/>
 <!-- T -->
 <path d="M232.6 572.4 V570 H246.6 V572.4 M239.6 570 V581.6 M237 581.6 H242.2"/>
 <path d="M248.4 581.4 V584.4 H245.4Z" fill="#c9cdd1" stroke="none"/>
 <!-- shape -->
 <path d="M269.6 573.6 C269.6 566.6 279.6 566.6 279.6 573.6 C279.6 576.6 277.6 578 275.6 578.4"/><rect x="265.4" y="574" width="9.8" height="8.8" rx="1.2"/>
 <path d="M280.6 581.4 V584.4 H277.6Z" fill="#c9cdd1" stroke="none"/>
 <!-- timer -->
 <circle cx="304" cy="576.9" r="6.4"/><path d="M301 568.8 H307 M304 573.4 V577.2 L306.2 578.6"/>
 <!-- keyframe+ -->
 <path d="M334.6 571.4 L340.2 577 L334.6 582.6 L329 577Z M339.6 571.4 L345.2 577 L339.6 582.6" /><path d="M327.4 570.4 H331.4 M329.4 568.4 V572.4" stroke-width="1"/>
 <path d="M356.5 568 V584" stroke="#3c4146" stroke-width="1.1"/>
 <!-- smart cut -->
 <path d="M369 569.6 H372.6 C374.6 569.6 375 570.4 375 572 V580 C375 581.6 374.6 582.6 372.6 582.6 H369 M380.6 569.6 H377.6 C375.6 569.6 375 570.4 375 572 M380.6 582.6 H377.6 C375.6 582.6 375 581.6 375 580 M372.4 576 H382 M379.4 573.4 L382.2 576 L379.4 578.6"/>
 <path d="M384.2 569 L385 571.2 L387.2 572 L385 572.8 L384.2 575 L383.4 572.8 L381.2 572 L383.4 571.2Z" fill="#3fe0c0" stroke="none"/>
 <!-- AI music -->
 <path d="M410.6 569.8 C402.6 568.6 398.6 577.6 403.6 581.6 C405 582.6 406.6 583 408 582.8"/><circle cx="407.6" cy="577" r="2.3"/><path d="M409.9 577 V569.6 L413 570.6"/>
 <path d="M409.8 583.6 L412.2 577.8 L414.6 583.6 M410.6 582 H413.8 M416.6 577.8 V583.6" stroke-width="1.1"/>
 <!-- dim: play eraser -->
 <g stroke="#4a5056"><path d="M438 569.6 H436.4 C435 569.6 434.4 570.2 434.4 571.6 V573.4 M444 569.6 H445.6 C447 569.6 447.6 570.2 447.6 571.6 V573.4 M434.4 578 V580 C434.4 581.4 435 582 436.4 582 H438.4"/><path d="M439 572.6 L444 575.8 L439 579Z"/><rect x="443" y="579.2" width="6.4" height="3.6" rx="1" transform="rotate(-35 446.2 581)"/></g>
 <!-- text to speech -->
 <path d="M471.6 571.6 H477.6 C479.4 571.6 480 572.4 480 574 V580.2 C480 581.8 479.4 582.6 477.6 582.6 H468.4 C466.6 582.6 466 581.8 466 580.2 V577.6 M464.2 579.2 L466 577.2 L467.8 579.2 M470.2 575 H476.4 M473.3 575 V580.4"/>
 <path d="M465.4 569.6 C466.2 570.4 466.2 571.8 465.4 572.6 M467.2 568.2 C468.8 569.8 468.8 572.4 467.2 574 M469 567 C471.4 569.2 471.4 573 469 575.2" stroke-width=".9"/>
 <!-- translate dim -->
 <g stroke="#4a5056"><path d="M498 571 H507 M502.4 569 V571 M505.6 571 C505 575 502 578.6 498.6 580.4 M499.6 573.6 C501 576.6 503.6 579 506 580"/><path d="M505.6 583.2 L509 574.6 L512.4 583.2 M506.8 580.6 H511.2"/><path d="M510.6 568 L511.1 569.4 L512.5 569.9 L511.1 570.4 L510.6 571.8 L510.1 570.4 L508.7 569.9 L510.1 569.4Z" fill="#4a5056" stroke="none"/></g>
 <!-- palette dim -->
 <g stroke="#4a5056"><path d="M543 576 C543 566.6 529.8 567.4 529.8 576 C529.8 580.6 533.6 583.4 536.6 583 C538.6 582.6 537.6 580.4 536.4 579.6 C535.4 578.6 536.2 577.2 537.6 577.2"/><circle cx="533.2" cy="574.2" r=".7"/><circle cx="535.8" cy="571.4" r=".7"/><circle cx="539.4" cy="572" r=".7"/><path d="M539.2 583 L541 578.2 L542.8 583 M544.6 578.2 V583" stroke-width="1"/></g>
</g>
<rect x="381" y="560.4" width="16.2" height="8.2" rx="2.6" fill="url(#gnew)"/>
<circle cx="418" cy="566" r="2" fill="#fa5a5a"/>

<!-- right tools -->
<circle cx="999.5" cy="576.2" r="9.4" fill="url(#gbot)"/>
<path d="M990.8 574.6 C990.8 567.6 1008.2 567.6 1008.2 574.6 C1008.2 581.6 990.8 581.6 990.8 574.6Z" fill="#13242a"/>
<path d="M994.8 573 L996.2 574.6 L994.8 576.2 M1004.2 573 V576.2" stroke="#e8fff8" stroke-width="1.2" fill="none" stroke-linecap="round" stroke-linejoin="round"/>
<g class="ic" style="stroke:#45e0c0" stroke-width="1.3">
 <rect x="1023.6" y="572.4" width="14" height="7.2" rx="1"/><path d="M1030.6 568.4 V583.6 M1027.4 569.6 L1028.4 570.8 M1033.8 569.6 L1032.8 570.8 M1027.4 582.4 L1028.4 581.2 M1033.8 582.4 L1032.8 581.2" stroke-width="1.1"/>
</g>
<g class="ic" stroke="#c9cdd1" stroke-width="1.3">
 <!-- text clip -->
 <path d="M1062.4 570.4 H1058 C1056.2 570.4 1055.6 571.2 1055.6 572.8 V580.2 C1055.6 581.8 1056.2 582.6 1058 582.6 H1066.4 C1068.2 582.6 1068.8 581.8 1068.8 580.2 V577.4 M1058.6 574.6 H1064.8 M1061.7 574.6 V580"/><path d="M1065.6 568.6 L1070.4 571.4 L1065.6 574.2Z"/>
 <!-- image clip -->
 <path d="M1094 570.4 H1090 C1088.2 570.4 1087.6 571.2 1087.6 572.8 V580.2 C1087.6 581.8 1088.2 582.6 1090 582.6 H1098.4 C1100.2 582.6 1100.8 581.8 1100.8 580.2 V577.4 M1087.8 580 C1091 575.6 1095 576.4 1097.4 578 C1098.6 578.6 1099.8 578 1100.6 577.2"/><path d="M1097.6 568.6 L1102 571.2 L1097.6 573.8Z"/><path d="M1091.8 572.6 L1092.3 573.7 L1093.4 574.2 L1092.3 574.7 L1091.8 575.8 L1091.3 574.7 L1090.2 574.2 L1091.3 573.7Z" fill="#c9cdd1" stroke="none"/>
 <!-- loop play -->
 <path d="M1124.6 569.4 C1119 571.4 1117.8 579.6 1123 582.8 M1129.6 582.8 C1135 580.6 1136.2 572.6 1131 569.4 M1123.2 568.4 L1124.8 569.4 L1124 571 M1131.2 583.8 L1129.4 582.8 L1130.4 581.2"/><path d="M1125 573 L1130 576.1 L1125 579.2Z"/>
 <!-- shield -->
 <path d="M1153.6 569.6 H1164.6 V577.4 C1164.6 580.4 1161.6 582 1159.1 583.4 C1156.6 582 1153.6 580.4 1153.6 577.4Z"/>
 <!-- mic -->
 <rect x="1187.8" y="568.6" width="6.4" height="10.4" rx="3.2"/><path d="M1185.4 576 C1185.4 583.4 1196.6 583.4 1196.6 576 M1188 583.6 H1194" />
 <!-- sliders -->
 <path d="M1217 568.6 V572.6 M1217 576.2 V583.6 M1223.6 568.6 V575.4 M1223.6 579 V583.6 M1230.2 568.6 V572 M1230.2 575.6 V583.6" stroke-width="1.2"/><circle cx="1217" cy="574.4" r="1.8"/><circle cx="1223.6" cy="577.2" r="1.8"/><circle cx="1230.2" cy="573.8" r="1.8"/>
 <!-- preview render -->
 <path d="M1259 582.2 H1250.4 C1248.4 582.2 1247.6 581.2 1247.6 579.4 V573 C1247.6 571.2 1248.4 570.2 1250.4 570.2 H1259.4 C1261.4 570.2 1262.2 571.2 1262.2 573 V576 M1252.6 568.2 V584 M1255 576.2 H1259.4 M1257.6 574.4 L1259.6 576.2 L1257.6 578"/><ellipse cx="1260.2" cy="581.2" rx="3.8" ry="2.4"/><circle cx="1260.2" cy="581.2" r=".8" fill="#c9cdd1"/>
 <!-- fit -->
 <rect x="1279.4" y="568.6" width="15.2" height="13.8" rx="3"/><path d="M1283 575.5 H1291 M1284.8 573.7 L1283 575.5 L1284.8 577.3 M1289.2 573.7 L1291 575.5 L1289.2 577.3" stroke-width="1.1"/>
 <!-- zoom -->
 <circle cx="1319.4" cy="576.3" r="7.2"/><path d="M1316 576.3 H1322.8"/>
 <circle cx="1415.5" cy="576.3" r="7.2"/><path d="M1412 576.3 H1419 M1415.5 572.8 V579.8"/>
 <path d="M1368 576 H1397" stroke="#4e555c" stroke-width="1.8"/>
 <path d="M1337.6 576 H1366" stroke="#d2d6da" stroke-width="1.8"/>
 <circle cx="1368.9" cy="576" r="4.2" fill="#181b1e" stroke="#b4b8bc" stroke-width="1.4"/>
</g>
<g fill="#3d444b">
 <rect x="1456" y="565.2" width="5.8" height="2.8" rx=".4"/><rect x="1464.2" y="565.2" width="5.8" height="2.8" rx=".4"/>
 <rect x="1456" y="570.2" width="5.8" height="2.8" rx=".4"/><rect x="1464.2" y="570.2" width="5.8" height="2.8" rx=".4"/>
 <rect x="1456" y="575.2" width="5.8" height="2.8" rx=".4"/><rect x="1464.2" y="575.2" width="5.8" height="2.8" rx=".4"/>
 <rect x="1456" y="580.2" width="5.8" height="2.8" rx=".4"/><rect x="1464.2" y="580.2" width="5.8" height="2.8" rx=".4"/>
 <rect x="1456" y="585.2" width="5.8" height="2.8" rx=".4"/><rect x="1464.2" y="585.2" width="5.8" height="2.8" rx=".4"/>
</g>
<path d="M1484.4 575 H1489.6 L1487 579.2Z" fill="#9aa0a6"/>

<!-- row 2 icons -->
<g class="ic" stroke="#d4d7da" stroke-width="1.4">
 <path d="M25.3 609.5 L27.4 607.4 C29.6 605.2 33 605.6 34 608.4 C34.6 610.4 33.6 611.9 31.3 614.2 M22.9 613.9 L21 615.8 C19 617.8 19.6 620.4 22.4 620.8 C24.4 621 26.4 619.6 28.8 617.4 M24.8 615.4 L29.8 611.5" stroke="#36c9a8"/>
 <g stroke="#d0d4d8" stroke-width="1.3"><path d="M56 609 H53.6 C49.6 609 49.6 616.6 53.6 616.6 H56 M54.6 612.8 H62.4 M60.4 610.8 L62.6 612.8 L60.4 614.8"/><rect x="58.2" y="607.6" width="9.4" height="10.4" rx="2"/></g>
 <g stroke="#4a5056" stroke-width="1.3"><rect x="83.4" y="608" width="11.4" height="4.8" rx="2.2"/><rect x="83.4" y="615" width="15" height="4.8" rx="2.2"/><path d="M89.6 612.8 V615"/></g>
</g>
</svg>
<div class="t" style="left:382.6px;top:559.5px;font-size:5.6px;font-weight:bold;color:#fff;line-height:10px;height:10px;letter-spacing:.1px">NEW</div>
</div>
</body>
</html>
